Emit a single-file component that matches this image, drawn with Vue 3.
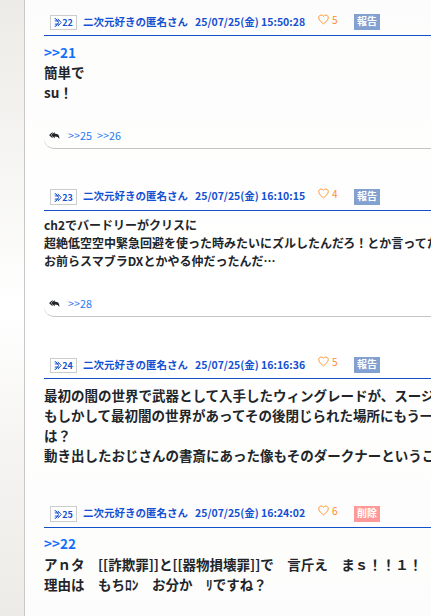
<script setup>
const posts = [
  { id: 22, time: '15:50:28', likes: 5, action: '報告', quote: '>>21', lines: ['簡単で', 'su！'], replies: ['>>25', '>>26'] },
  { id: 23, time: '16:10:15', likes: 4, action: '報告', lines: ['ch2でバードリーがクリスに', '超絶低空空中緊急回避を使った時みたいにズルしたんだろ！とか言ってた', 'お前らスマブラDXとかやる仲だったんだ…'], replies: ['>>28'] },
  { id: 24, time: '16:16:36', likes: 5, action: '報告', lines: ['最初の闇の世界で武器として入手したウィングレードが、スージ', 'もしかして最初闇の世界があってその後閉じられた場所にもう一', 'は？', '動き出したおじさんの書斎にあった像もそのダークナーというこ'], replies: [] },
  { id: 25, time: '16:24:02', likes: 6, action: '削除', quote: '>>22', lines: ['アｎタ　[[詐欺罪]]と[[器物損壊罪]]で　言斤え　まｓ！！１！', '理由は　もちﾛﾝ　お分か　ﾘですね？'], replies: [] },
]
</script>

<template>
  <div class="page">
    <main class="thread">
      <article v-for="p in posts" :key="p.id" class="post" :class="'post-' + p.id">
        <header>
          <span class="num"><svg viewBox="0 0 8 9"><path d="M.6 .8H2L4.500 4.500 2 8.200H.6M3.800 .8 7.200 4.500 3.800 8.200M.8 2.900h4M.8 6.100h4" /></svg>{{ p.id }}</span>
          <span class="name">二次元好きの匿名さん</span>
          <time>25/07/25(金) {{ p.time }}</time>
          <span class="like"><svg viewBox="0 0 12 11"><path d="M6 10.200C4.700 9.100 .8 6.600 .8 3.500.8 1.800 1.900.7 3.300.7 4.600.7 5.500 1.200 6 2 6.500 1.200 7.400.7 8.700.7c1.400 0 2.500 1.100 2.500 2.800C11.200 6.600 7.300 9.100 6 10.200Z" /></svg><span>{{ p.likes }}</span></span>
          <span class="action" :class="{ danger: p.action === '削除' }">{{ p.action }}</span>
        </header>
        <div class="body">
          <p v-if="p.quote" class="quote">{{ p.quote }}</p>
          <p v-for="l in p.lines" :key="l">{{ l }}</p>
        </div>
        <footer v-if="p.replies.length">
          <svg viewBox="0 0 12 8"><path d="M3.800 0v1.300L1.700 3.500l2.100 2.200V7L.2 3.900a.6.6 0 0 1 0-.8ZM6.200 0v2c3.600 0 5.600 1.400 5.300 6-1-2-2.300-2.900-5.300-2.900V7L2.600 3.900a.6.6 0 0 1 0-.8Z" /></svg>
          <a v-for="r in p.replies" :key="r">{{ r }}</a>
        </footer>
      </article>
    </main>
  </div>
</template>

<style>
body { margin: 0; overflow: hidden; }
</style>

<style scoped>
.page {
  height: 616px;
  box-sizing: border-box;
  padding-left: 24px;
  overflow: hidden;
  background: linear-gradient(#ecebe7 0, #f2f1ee 100px, #fff 310px, #f5f4f2 450px, #ecebe7 616px);
  font-family: "Noto Sans CJK JP", sans-serif;
  color: #212529;
}
.thread {
  height: 616px;
  box-sizing: border-box;
  border-left: 1px solid #c8c8c8;
  padding-left: 19px;
  background: rgba(255, 255, 255, .85);
  white-space: nowrap;
}
header {
  height: 36px;
  box-sizing: border-box;
  border-bottom: 1px solid #1450c8;
  padding: 0 0 5px 6px;
  display: flex;
  align-items: flex-end;
  color: #1450d2;
  font-size: 10.5px;
  line-height: 16px;
  font-weight: 700;
}
.num {
  width: 27px;
  height: 15px;
  box-sizing: border-box;
  border: 1px solid #ccc;
  background: #fff;
  display: flex;
  align-items: center;
  justify-content: center;
  font-size: 9px;
  line-height: 13px;
}
.num svg { width: 8px; height: 9px; fill: none; stroke: currentColor; stroke-width: 1; }
.name { margin-left: 6px; width: 112px; }
time { width: 123.500px; }
.like {
  display: flex;
  width: 35.500px;
  height: 17px;
  line-height: 14px;
  font-size: 10px;
  font-weight: 400;
  color: #ff8c1e;
}
.like svg { width: 11px; height: 11px; margin: 1px 3px 0 -.5px; fill: none; stroke: currentColor; stroke-width: 1; }
.action {
  width: 26px;
  height: 16px;
  line-height: 14px;
  text-align: center;
  font-size: 10px;
  font-weight: 700;
  color: #fff;
  background: #82a0d0;
}
.danger { background: #ff9999; }
.body { padding-top: 6px; font-size: 13.500px; line-height: 20px; font-weight: 700; }
p { margin: 0; }
.quote { color: #0d6efd; }
footer {
  height: 26px;
  box-sizing: border-box;
  border-bottom: 1px solid #c4c4c4;
  border-bottom-left-radius: 10px;
  padding: 0 0 1px 5px;
  display: flex;
  align-items: center;
  font-size: 10.800px;
  line-height: 22px;
}
footer svg { width: 11px; height: 7px; margin: 1px 8px 0 0; fill: #212529; }
footer a { color: #2878f0; margin-right: 5px; }
.post-22 footer { margin-top: 21px; }
.post-23 header { height: 62px; }
.post-23 .body { padding-top: 5px; font-size: 12px; line-height: 18px; }
.post-23 footer { margin-top: 21px; }
.post-23 .num, .post-25 .num { height: 16px; }
.post-23 .name, .post-23 time, .post-25 .name, .post-25 time { line-height: 18px; }
.post-23 .like, .post-24 .like, .post-25 .like { height: 18px; }
.post-24 header { height: 62px; }
.post-25 header { height: 62px; }
.post-24 .body { height: 87px; box-sizing: border-box; }
.post-25 .body { padding-top: 5px; }
.post-25 .quote { margin-bottom: 1px; }
</style>
